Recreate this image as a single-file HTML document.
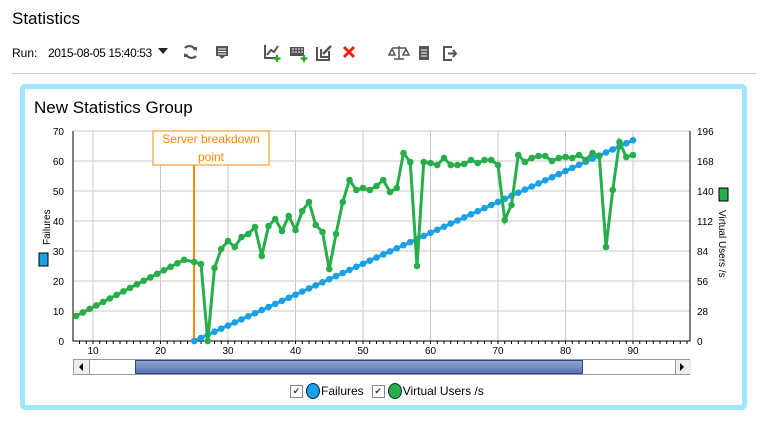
<!DOCTYPE html>
<html><head><meta charset="utf-8"><style>
body{margin:0;width:765px;height:423px;background:#fff;font-family:"Liberation Sans",sans-serif;position:relative;overflow:hidden}
.a{position:absolute}
</style></head><body>
<div class="a" style="left:12px;top:9px;font-size:17px;color:#000">Statistics</div>
<div class="a" style="left:12px;top:46px;font-size:12px">Run:</div>
<div class="a" style="left:48px;top:46px;font-size:12px;letter-spacing:-0.4px">2015-08-05 15:40:53</div>
<svg class="a" style="left:155px;top:40px" width="320" height="26">
<path d="M3 8h10l-5 6z" fill="#222"/>
<g fill="none" stroke="#555" stroke-width="2.2"><path d="M30 8a6 6 0 0 1 10 2M41 16a6 6 0 0 1-10-2"/></g>
<path d="M38 7l4 0 0 4zM33 17l-4 0 0-4z" fill="#555"/>
<rect x="61" y="6" width="12" height="10" fill="#555"/><path d="M64 16h6l-3 3z" fill="#555"/><path d="M63 9h8M63 11.5h8M63 14h8" stroke="#fff"/>
<path d="M110 5v13h12" stroke="#555" stroke-width="2" fill="none"/><path d="M112 15l4-5 3 2 4-6" stroke="#555" stroke-width="2" fill="none"/><path d="M122 15v7M118.5 18.5h7" stroke="#2a2" stroke-width="2.2"/>
<rect x="135" y="7" width="14" height="9" fill="#555"/><path d="M137 9h2m1 0h2m1 0h2m1 0h2M137 12h2m1 0h2m1 0h2m1 0h2" stroke="#fff"/><path d="M149 15v7M145.5 18.5h7" stroke="#2a2" stroke-width="2.2"/>
<path d="M163 8h-1v12h12v-8M166 9v8h8v-6" stroke="#555" stroke-width="2" fill="none"/><path d="M168 14l8-8" stroke="#555" stroke-width="2.5"/>
<path d="M189 7l10 10M199 7l-10 10" stroke="#e21" stroke-width="3"/>
<path d="M237 8h14M244 6v13M239 19h10M237 9l-3 6h6zM251 9l-3 6h6z" stroke="#555" stroke-width="1.5" fill="none"/>
<rect x="264" y="6" width="10" height="14" fill="#555"/><path d="M266 10h6M266 13h6M266 16h6" stroke="#fff"/>
<path d="M297 7h-8v13h8" stroke="#555" stroke-width="2" fill="none"/><path d="M293 13.5h8M298 10l3 3.5-3 3.5" stroke="#555" stroke-width="2" fill="none"/>
</svg>
<div class="a" style="left:12px;top:73px;width:744px;height:1px;background:#ccc"></div>
<div class="a" style="left:20px;top:84px;width:717px;height:316px;border:5px solid #9ee6fb;border-radius:5px"></div>
<div class="a" style="left:34px;top:98px;font-size:17px">New Statistics Group</div>
<svg class="a" id="ch" style="left:0;top:0" width="765" height="423" font-family="Liberation Sans" font-size="10"></svg>
<div class="a" style="left:73px;top:359px;width:617px;height:16px;background:#fff;border:1px solid #999;box-sizing:border-box"></div>
<div class="a" style="left:74px;top:360px;width:15px;height:14px;background:#eee;border-right:1px solid #999"></div>
<div class="a" style="left:675px;top:360px;width:15px;height:14px;background:#eee;border-left:1px solid #999"></div>
<div class="a" style="left:135px;top:360px;width:448px;height:14px;background:linear-gradient(#8fa6cf,#5775b0);border:1px solid #2c4a8a;box-sizing:border-box"></div>
<svg class="a" style="left:76px;top:362px" width="612" height="12"><path d="M7 1v8l-4-4z" fill="#000"/><path d="M604 1v8l4-4z" fill="#000"/></svg>
<div class="a" style="left:290px;top:383px;font-size:12px;display:flex;align-items:center">
<span style="width:11px;height:11px;border:1px solid #888;display:inline-block;font-size:9px;line-height:11px;text-align:center;color:#345">✔</span>
<span style="width:12px;height:14px;border-radius:50%;background:#19a0e6;border:1px solid #024;display:inline-block;margin:0 1px 0 3px"></span>Failures
<span style="width:11px;height:11px;border:1px solid #888;display:inline-block;font-size:9px;line-height:11px;text-align:center;color:#345;margin-left:8px">✔</span>
<span style="width:12px;height:14px;border-radius:50%;background:#27ae4b;border:1px solid #032;display:inline-block;margin:0 1px 0 3px"></span>Virtual Users /s</div>
<script>
var s='',X=function(v){return 93+(v-10)*6.75},Y=function(v){return 341-v*3};
for(var i=10;i<=90;i+=10)s+='<line x1="'+X(i)+'" y1="131" x2="'+X(i)+'" y2="341" stroke="#c8c8c8"/><text x="'+X(i)+'" y="354" text-anchor="middle">'+i+'</text>';
for(var j=0;j<=70;j+=10){s+='<line x1="73" y1="'+Y(j)+'" x2="690" y2="'+Y(j)+'" stroke="#c8c8c8"/><text x="64" y="'+(Y(j)+4)+'" text-anchor="end">'+j+'</text><text x="697" y="'+(Y(j)+4)+'">'+(j*2.8)+'</text>';}
s+='<path d="M73 131V341H690V131" stroke="#000" fill="none"/>';
for(var t=8;t<=98;t++)s+='<line x1="'+X(t)+'" y1="341" x2="'+X(t)+'" y2="344" stroke="#000"/>';
s+='<rect x="39" y="253" width="9" height="13" fill="#19a0e6" stroke="#000"/><text transform="translate(50,245) rotate(-90)">Failures</text>';
s+='<rect x="719" y="188" width="9" height="13" fill="#27ae4b" stroke="#000"/><text transform="translate(719,210) rotate(90)">Virtual Users /s</text>';
s+='<rect x="153" y="131" width="116" height="34" fill="#fff" stroke="#f80"/><text x="211" y="143" fill="#f80" font-size="12" text-anchor="middle">Server breakdown</text><text x="211" y="161" fill="#f80" font-size="12" text-anchor="middle">point</text><line x1="194" y1="165" x2="194" y2="341" stroke="#f80" stroke-width="2"/>';
var b=[];for(var k=25;k<=90;k++)b.push([X(k),Y((k-25)*1.03)]);
var g=[];for(var k=7.5;k<=24;k++)g.push([X(k),316-(k-7.5)*58/16.5]);
var gy=[262,264,341,268,249,241,247,237,234,227,256,226,219,231,216,230,211,202,225,232,269,234,202,180,190,188,190,186,180,192,188,153,162,266,162,163,165,158,165,165,164,160,163,160,160,165,220,205,155,162,158,156,156,161,158,157,158,155,160,153,156,247,190,142,157,155];
for(var k=0;k<gy.length;k++)g.push([X(25+k),gy[k]]);
function d(a,c){var p=a.map(function(q){return q.join(',')}).join(' ');var o='<polyline points="'+p+'" fill="none" stroke="'+c+'" stroke-width="3"/>';a.forEach(function(q){o+='<circle cx="'+q[0]+'" cy="'+q[1]+'" r="3.3" fill="'+c+'"/>'});return o}
s+=d(b,'#19a0e6')+d(g,'#27ae4b');
document.getElementById('ch').innerHTML=s;
</script>
</body></html>
